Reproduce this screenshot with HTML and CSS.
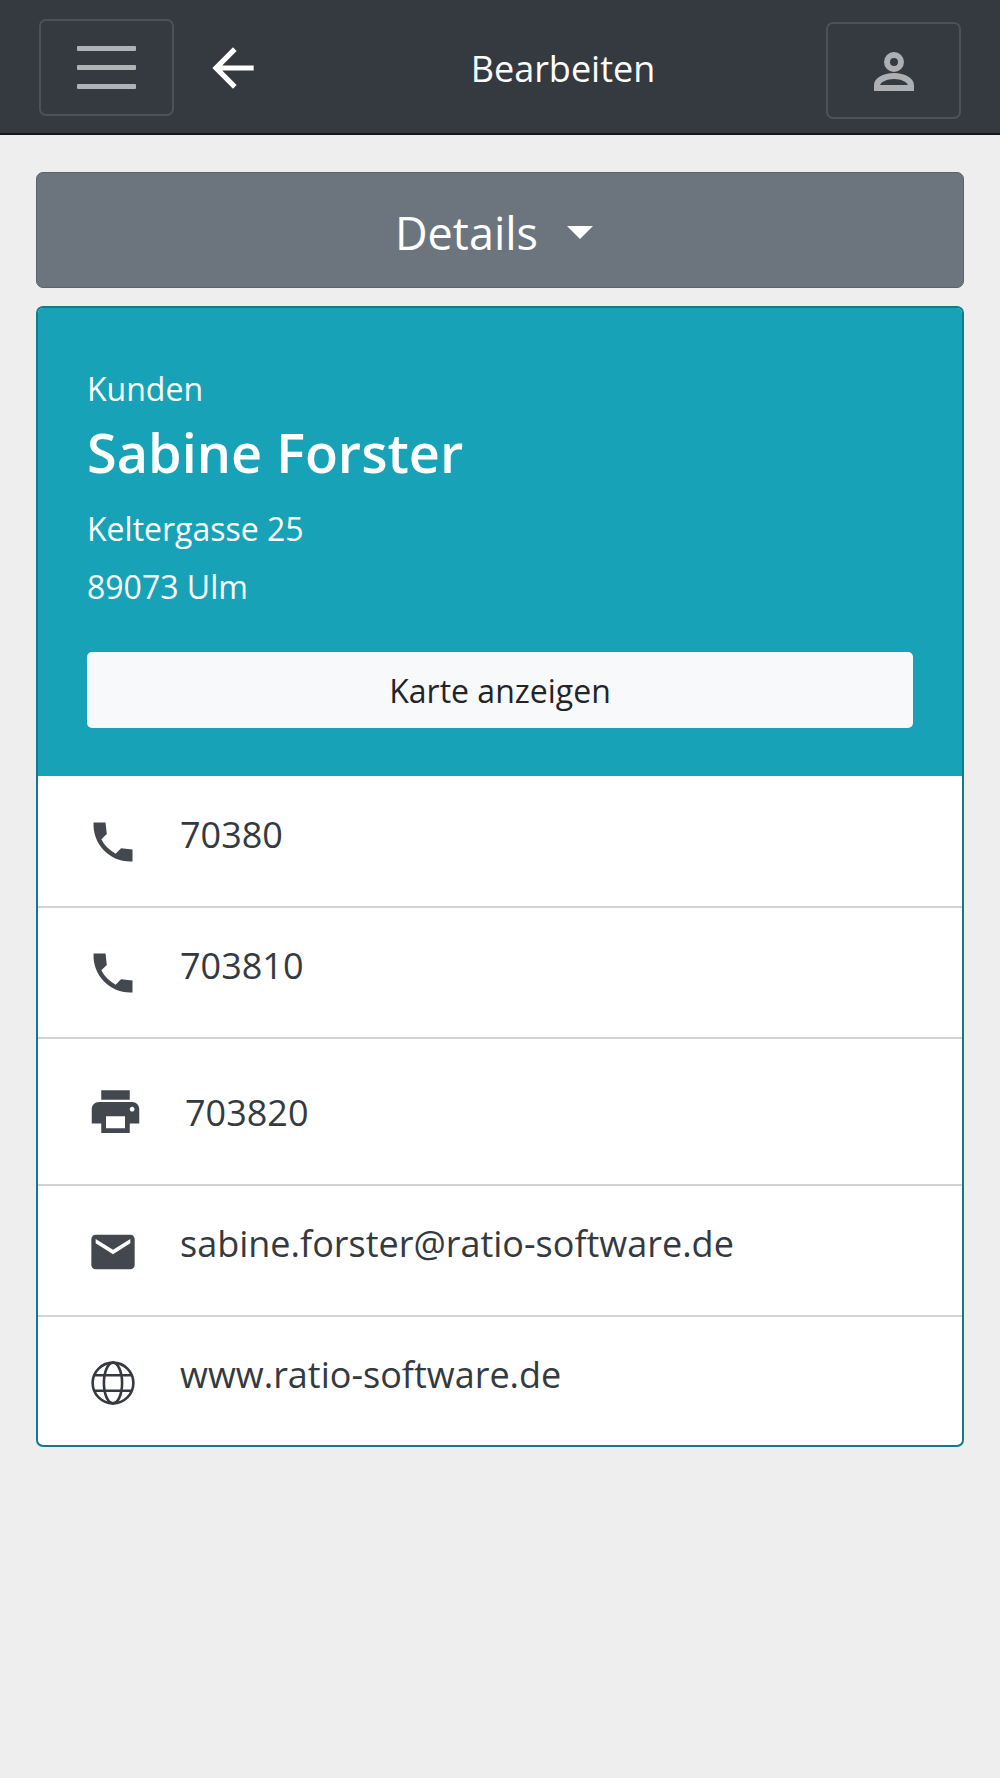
FILE: index.html
```html
<!DOCTYPE html>
<html lang="de">
  <head>
    <meta charset="UTF-8" />
    <meta name="viewport" content="width=device-width, initial-scale=1.0" />
    <title>Bearbeiten</title>
    <link rel="stylesheet" href="styles.css">
  </head>

  <body>
    <nav class="navbar">
      <button class="toggler toggler-menu" type="button">
        <span class="toggler-bar"></span>
        <span class="toggler-bar"></span>
        <span class="toggler-bar"></span>
      </button>
      <svg class="back" viewBox="0 0 24 24"><path d="M20 11H7.83l5.59-5.59L12 4l-8 8 8 8 1.41-1.41L7.83 13H20v-2z" /></svg>
      <span class="navbar-title">Bearbeiten</span>
      <button class="toggler toggler-user" type="button">
        <svg class="user" viewBox="0 0 40 40">
          <circle class="user-head" cx="20" cy="11" r="7" />
          <path class="user-body" fill-rule="evenodd" d="M0 40V34C0 27 9 22 20 22s20 5 20 12v6zM6 34h28c-1-3-7-6-14-6s-13 3-14 6z" />
        </svg>
      </button>
    </nav>

    <main class="content">
      <button class="details" type="button"><span class="details-text">Details</span><span class="caret"></span></button>

      <section class="card">
        <header class="card-head">
          <div class="card-label">Kunden</div>
          <h1 class="card-name">Sabine Forster</h1>
          <p class="card-line">Keltergasse 25</p>
          <p class="card-line">89073 Ulm</p>
          <button class="map" type="button">Karte anzeigen</button>
        </header>

        <ul class="list">
          <li class="item">
            <svg class="icon icon-call" viewBox="0 0 24 24"><path d="M21 15.46l-5.27-.61-2.52 2.52c-2.83-1.44-5.15-3.75-6.59-6.59l2.53-2.53L8.54 3H3.03C2.45 13.18 10.82 21.55 21 20.97v-5.51z" /></svg>
            <span>70380</span>
          </li>
          <li class="item">
            <svg class="icon icon-call" viewBox="0 0 24 24"><path d="M21 15.46l-5.27-.61-2.52 2.52c-2.83-1.44-5.15-3.75-6.59-6.59l2.53-2.53L8.54 3H3.03C2.45 13.18 10.82 21.55 21 20.97v-5.51z" /></svg>
            <span>703810</span>
          </li>
          <li class="item item-fax">
            <svg class="icon icon-print" viewBox="0 0 24 24"><path d="M19 8H5c-1.66 0-3 1.34-3 3v6h4v4h12v-4h4v-6c0-1.66-1.34-3-3-3zm-3 11H8v-5h8v5zm3-7c-.55 0-1-.45-1-1s.45-1 1-1 1 .45 1 1-.45 1-1 1zm-1-9H6v4h12V3z" /></svg>
            <span>703820</span>
          </li>
          <li class="item">
            <svg class="icon" viewBox="0 0 24 24"><path d="M20 4H4c-1.1 0-1.99.9-1.99 2L2 18c0 1.1.9 2 2 2h16c1.1 0 2-.9 2-2V6c0-1.1-.9-2-2-2zm0 4l-8 5-8-5V6l8 5 8-5v2z" /></svg>
            <span>sabine.forster@ratio-software.de</span>
          </li>
          <li class="item">
            <svg class="icon icon-globe" viewBox="0 0 24 24">
              <circle cx="12" cy="12" r="9.4" />
              <ellipse cx="12" cy="12" rx="4.2" ry="9.4" />
              <path d="M3.4 8.4h17.2M3.4 15.6h17.2" />
            </svg>
            <span>www.ratio-software.de</span>
          </li>
        </ul>
      </section>
    </main>
  </body>
</html>
```

FILE: styles.css
```css
html,
body {
  margin: 0;
  padding: 0;
}

body {
  min-height: 1778px;
  background-color: #eeeeee;
  color: #343a40;
  font-family: "Open Sans", "Noto Sans", sans-serif;
}

button {
  font-family: inherit;
}

.navbar {
  display: flex;
  align-items: flex-start;
  box-sizing: border-box;
  height: 135px;
  padding: 19px 39px 0 39px;
  background-color: #343a40;
  border-bottom: 2px solid #16181b;
}

.toggler {
  display: flex;
  flex-direction: column;
  align-items: center;
  justify-content: center;
  flex: none;
  box-sizing: border-box;
  width: 135px;
  height: 97px;
  padding: 0;
  background: transparent;
  border: 2px solid #4d5257;
  border-radius: 7px;
}

.toggler-user {
  margin-top: 3px;
}

.toggler-bar {
  display: block;
  width: 59px;
  height: 5px;
  margin: 7px 0;
  background-color: #b0b3b5;
  border-radius: 1px;
}

.back {
  flex: none;
  width: 62px;
  height: 62px;
  margin: 18px 0 0 28px;
  fill: #ffffff;
}

.navbar-title {
  flex: 1;
  margin-top: 28px;
  padding-left: 36px;
  text-align: center;
  color: #ffffff;
  font-size: 36px;
  line-height: 44px;
}

.user {
  width: 40px;
  height: 40px;
}

.user-head {
  fill: none;
  stroke: #adafb2;
  stroke-width: 6;
}

.user-body {
  fill: #adafb2;
}

.content {
  padding: 37px 36px 0 36px;
}

.details {
  display: flex;
  align-items: center;
  justify-content: center;
  box-sizing: border-box;
  width: 100%;
  height: 116px;
  padding: 4px 12px 0 0;
  background-color: #6c757d;
  border: 1px solid #5c646b;
  border-radius: 7px;
  color: #ffffff;
  font-size: 45px;
}

.caret {
  width: 0;
  height: 0;
  margin-left: 29px;
  border-top: 13px solid #ffffff;
  border-left: 13px solid transparent;
  border-right: 13px solid transparent;
}

.card {
  margin-top: 18px;
  overflow: hidden;
  background-color: #ffffff;
  border: 2px solid #117a8b;
  border-radius: 7px;
}

.card-head {
  height: 468px;
  box-sizing: border-box;
  padding: 61px 49px 0 49px;
  background-color: #17a2b8;
  color: #ffffff;
}

.card-label {
  font-size: 32px;
  line-height: 40px;
}

.card-name {
  margin: 10px 0 0 0;
  font-size: 54px;
  font-weight: 600;
  line-height: 66px;
}

.card-line {
  margin: 24px 0 0 0;
  font-size: 32px;
  line-height: 40px;
}

.card-line + .card-line {
  margin-top: 18px;
}

.map {
  display: block;
  box-sizing: border-box;
  width: 100%;
  height: 76px;
  margin-top: 45px;
  background-color: #f8f9fa;
  border: 0;
  border-radius: 5px;
  color: #212529;
  font-size: 32px;
}

.list {
  margin: 0;
  padding: 0;
  list-style: none;
}

.item {
  display: flex;
  align-items: flex-start;
  box-sizing: border-box;
  height: 131px;
  padding: 36px 0 0 50px;
  border-bottom: 2px solid #d3d3d3;
  color: #343a40;
  font-size: 36px;
  line-height: 44px;
}

.item:first-child {
  height: 132px;
  padding-top: 37px;
}

.item:last-child {
  height: 128px;
  border-bottom: 0;
}

.item-fax {
  height: 147px;
  padding-top: 52px;
}

.icon {
  flex: none;
  width: 52px;
  height: 52px;
  margin: 4px 41px 0 -1px;
  fill: #43484e;
}

.icon-call {
  margin-top: 3px;
}

.icon-print {
  width: 57px;
  height: 57px;
  margin: -8px 41px 0 -1px;
}

.icon-globe {
  fill: none;
  stroke: #343a40;
  stroke-width: 1.2;
}
```
